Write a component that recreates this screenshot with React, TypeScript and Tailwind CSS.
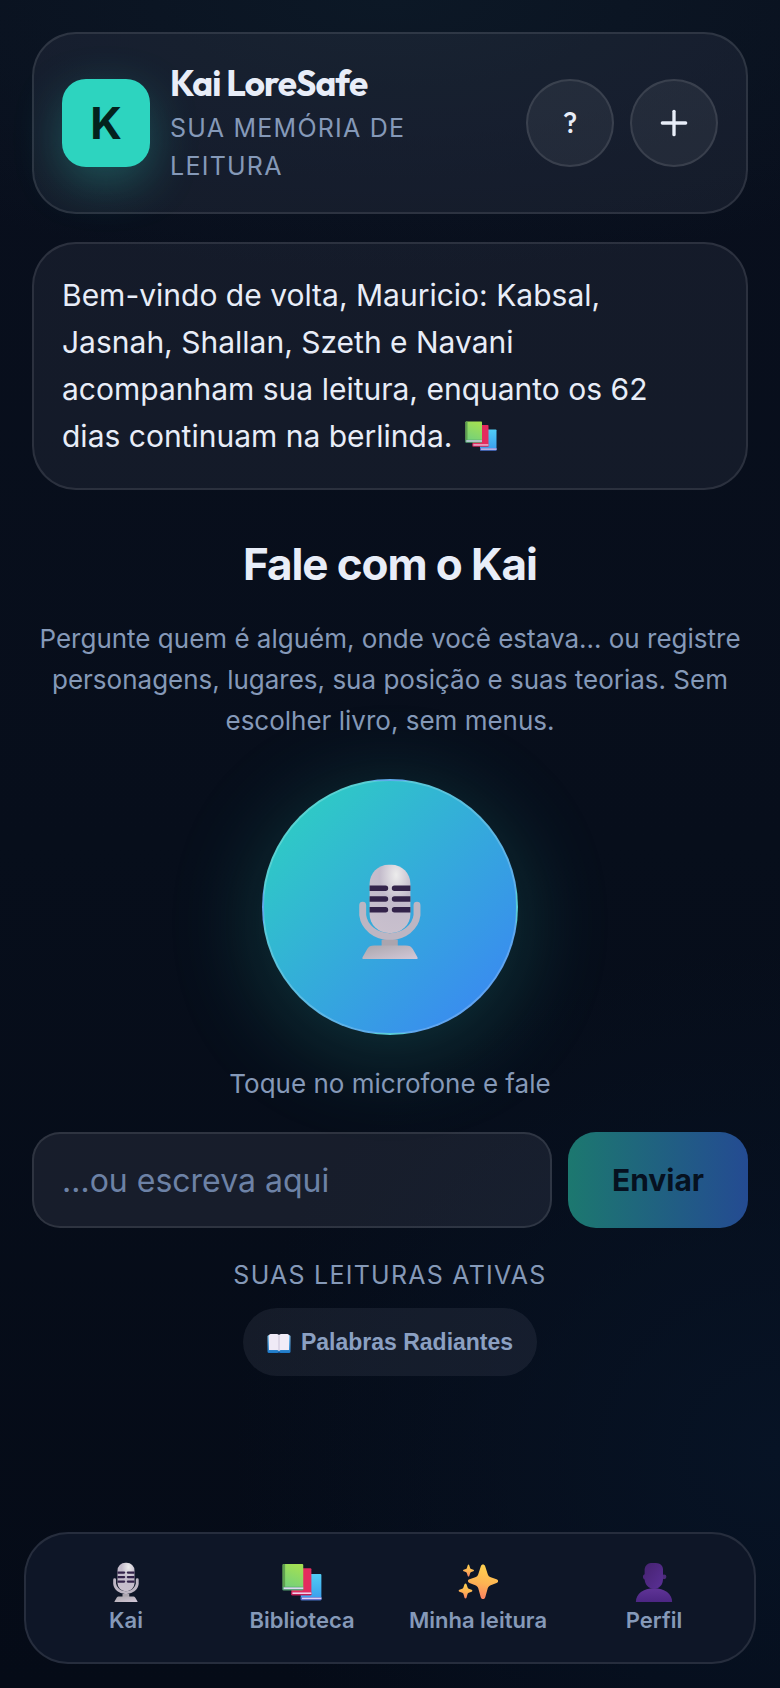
import { useState } from "react";
import { Plus } from "lucide-react";

function MicIcon({ className, id }: { className?: string; id: string }) {
  return (
    <svg viewBox="0 0 32 32" className={className} aria-hidden="true">
      <defs>
        <radialGradient id={`${id}-head`} cx="0.65" cy="0.15" r="0.9">
          <stop offset="0" stopColor="#ececec" />
          <stop offset="0.45" stopColor="#c3bbcb" />
          <stop offset="1" stopColor="#c9c0cd" />
        </radialGradient>
        <linearGradient id={`${id}-base`} x1="0" y1="0" x2="1" y2="1">
          <stop offset="0" stopColor="#aaa6ac" />
          <stop offset="1" stopColor="#d3c8d8" />
        </linearGradient>
      </defs>
      <path
        d="M6.9 14.1V17.4A9.1 8 0 0 0 25 17.4V14.1"
        fill="none"
        stroke="#bdb6c3"
        strokeWidth="2.3"
        strokeLinecap="round"
      />
      <path d="M13.2 25.6h5.4v2.8h-5.4z" fill="#aba5ae" />
      <path
        d="M10.8 27.5h10.4c1.3 0 1.9.3 2.4 1.2l1.5 2.6c.3.5.1.7-.4.7H7.3c-.5 0-.7-.2-.4-.7l1.5-2.6c.5-.9 1.1-1.2 2.4-1.2Z"
        fill={`url(#${id}-base)`}
      />
      <rect x="9.2" y="0.6" width="13.6" height="22.7" rx="6.3" fill={`url(#${id}-head)`} />
      <g fill="#33234a">
        <path d="M9.2 7.5h5.3a.9.9 0 0 1 0 1.8H9.2zM22.8 7.5h-5.3a.9.9 0 0 0 0 1.8h5.3z" />
        <path d="M9.2 11.1h5.3a.9.9 0 0 1 0 1.8H9.2zM22.8 11.1h-5.3a.9.9 0 0 0 0 1.8h5.3z" />
        <path d="M9.2 14.7h5.3a.9.9 0 0 1 0 1.8H9.2zM22.8 14.7h-5.3a.9.9 0 0 0 0 1.8h5.3z" />
      </g>
    </svg>
  );
}

function BooksIcon({ className, id }: { className?: string; id: string }) {
  return (
    <svg viewBox="0 0 32 32" className={className} aria-hidden="true">
      <defs>
        <linearGradient id={`${id}-g`} x1="0.7" y1="0" x2="0.4" y2="1">
          <stop offset="0" stopColor="#a4e052" />
          <stop offset="1" stopColor="#72d07c" />
        </linearGradient>
        <linearGradient id={`${id}-b`} x1="0" y1="0" x2="0" y2="1">
          <stop offset="0" stopColor="#50cdf5" />
          <stop offset="1" stopColor="#3a9bec" />
        </linearGradient>
      </defs>
      <rect x="15" y="9.5" width="16.5" height="21" rx="0.8" fill={`url(#${id}-b)`} />
      <path d="M15 28h16.5v2q0 .5-.5.5H15z" fill="#5865c8" />
      <path d="M16 28.5h15.5v1.2H16z" fill="#d9d3f3" />
      <rect x="7.5" y="5" width="16" height="21.5" rx="0.8" fill="#e42b5e" />
      <path d="M7.5 24h16v2q0 .5-.5.5H7.5z" fill="#c31e55" />
      <path d="M8.3 24.3h15.2v1.3H8.3z" fill="#f6cfe8" />
      <rect x="0.5" y="1.5" width="16.5" height="21" rx="0.8" fill={`url(#${id}-g)`} />
      <path d="M1.3 1.5h1.2v18.5H.5V2.3q0-.8.8-.8z" fill="#5fa050" />
      <path d="M.5 19.8H17v2.2q0 .5-.5.5H.5z" fill="#4e9b72" />
      <path d="M1.3 20.3H17v1.4H1.3z" fill="#dcd8ef" />
    </svg>
  );
}

function OpenBookIcon({ className }: { className?: string }) {
  return (
    <svg viewBox="0 0 24 24" className={className} aria-hidden="true">
      <defs>
        <linearGradient id="open-book-cover" x1="0" y1="0" x2="0" y2="1">
          <stop offset="0" stopColor="#8ec9ee" />
          <stop offset="1" stopColor="#1b78c8" />
        </linearGradient>
      </defs>
      <rect x="0.5" y="5" width="23" height="18" rx="1.5" fill="url(#open-book-cover)" />
      <path d="M2 5.5Q2 4 3.5 4H10q2 0 2 1.5v15.5q-.5-1-2-1H2z" fill="#efeaf6" />
      <path d="M22 5.5Q22 4 20.5 4H14q-2 0-2 1.5v15.5q.5-1 2-1h8z" fill="#f1ecf7" />
      <path d="M12 5.5V21" stroke="#c6bfd4" strokeWidth="0.9" />
      <path d="M10.5 22h3l-1.5 1.5z" fill="#134f94" />
    </svg>
  );
}

function SparklesIcon({ className }: { className?: string }) {
  return (
    <svg viewBox="0 0 32 32" className={className} aria-hidden="true">
      <defs>
        <linearGradient id="spark" x1="0.6" y1="0" x2="0.4" y2="1">
          <stop offset="0" stopColor="#ffd24f" />
          <stop offset="0.55" stopColor="#fdb353" />
          <stop offset="1" stopColor="#fb7f62" />
        </linearGradient>
      </defs>
      <g fill="url(#spark)">
        <path d="M18.2 3.5c.7-2 2.9-2 3.6 0l2 6.200c.4 1.200 1.200 2 2.400 2.400l4.600 1.600c1.700.6 1.700 2.500 0 3.100l-4.600 1.700c-1.200.4-2 1.200-2.400 2.400l-2 7.200c-.7 2-2.900 2-3.600 0l-2-7.200c-.4-1.200-1.200-2-2.400-2.400l-4.600-1.700c-1.700-.6-1.700-2.500 0-3.100l4.600-1.600c1.200-.4 2-1.200 2.400-2.400z" />
        <path d="M7.8 2.5c.2-.7 1-.7 1.200 0l.7 2.200q.2.700.9.900l1.700.6c.6.200.6 1 0 1.200l-1.700.6q-.7.200-.9.900L9 11.100c-.2.700-1 .7-1.200 0l-.7-2.200q-.2-.7-.9-.9l-1.700-.6c-.6-.2-.6-1 0-1.200l1.700-.6q.7-.2.900-.9z" />
        <path d="M5.2 17.7c.3-.8 1.300-.8 1.600 0l.9 2.700q.2.700.9.900l2.300.8c.8.300.8 1.300 0 1.600l-2.300.8q-.7.200-.9.900l-.9 3.100c-.3.800-1.300.8-1.600 0l-.9-3.100q-.2-.7-.9-.9l-2.300-.8c-.8-.3-.8-1.300 0-1.600l2.300-.8q.7-.2.900-.9z" />
      </g>
    </svg>
  );
}

function ProfileIcon({ className }: { className?: string }) {
  return (
    <svg viewBox="0 0 32 32" className={className} aria-hidden="true">
      <defs>
        <linearGradient id="profile-head" x1="0" y1="0" x2="1" y2="1">
          <stop offset="0" stopColor="#45226f" />
          <stop offset="1" stopColor="#5a3096" />
        </linearGradient>
        <linearGradient id="profile-body" x1="0" y1="0" x2="0" y2="1">
          <stop offset="0" stopColor="#5f3497" />
          <stop offset="1" stopColor="#4c2683" />
        </linearGradient>
      </defs>
      <path d="M1.5 32c0-6.5 6-11 14.5-11s14.5 4.5 14.5 11z" fill="url(#profile-body)" />
      <circle cx="24" cy="11.8" r="1.9" fill="#4b2b78" />
      <path
        d="M8.5 5.5C9 2.5 11 1 13.5.8h4c3.3.2 5.7 2 5.7 5.2v7.5c0 4.500-3 8-7.200 8s-7.300-3.500-7.500-7.500C7 13.500 6.500 10.500 8.500 9.800z"
        fill="url(#profile-head)"
      />
    </svg>
  );
}

const tabs = [
  { label: "Kai", icon: <MicIcon id="tab-mic" className="size-10" /> },
  { label: "Biblioteca", icon: <BooksIcon id="tab-books" className="size-10" /> },
  { label: "Minha leitura", icon: <SparklesIcon className="size-10" /> },
  { label: "Perfil", icon: <ProfileIcon className="size-10" /> },
];

const roundButton =
  "flex size-[88px] items-center justify-center rounded-full border-2 border-white/10 bg-white/6 text-[#e8edf8]";

export default function App() {
  const [message, setMessage] = useState("");

  return (
    <div className="flex min-h-screen flex-col bg-[#060c19] bg-[radial-gradient(ellipse_90%_16%_at_50%_0%,#0c1826_0%,transparent_100%),radial-gradient(ellipse_70%_30%_at_100%_86%,#071325_0%,transparent_100%),linear-gradient(180deg,#090f1d_0%,#070e1b_50%,#050b17_100%)] px-6 pb-6 pt-8 font-['Inter',sans-serif] text-[#e8edf8]">
      <div className="flex flex-col px-2">
        <header className="flex items-center gap-5 rounded-[44px] border-2 border-white/10 bg-[#dcdcff]/6 px-7 py-[27px]">
          <div className="flex size-[88px] shrink-0 items-center justify-center rounded-3xl bg-[#2dd4bf] text-[44px] font-bold text-[#03221d] shadow-[0_16px_48px_rgba(45,212,191,0.3)]">
            K
          </div>
          <div className="min-w-0 flex-1">
            <h1 className="font-['Outfit','Lato',sans-serif] text-[35px] font-bold leading-[44px] tracking-tight">
              Kai LoreSafe
            </h1>
            <p className="mt-1 text-[25px] leading-[38px] tracking-wider text-[#8599b8]">SUA MEMÓRIA DE LEITURA</p>
          </div>
          <div className="flex gap-4">
            <button type="button" aria-label="Ajuda" className={`${roundButton} font-['Outfit','Lato',sans-serif] text-[28px] font-medium`}>
              ?
            </button>
            <button type="button" aria-label="Adicionar" className={roundButton}>
              <Plus className="size-10" />
            </button>
          </div>
        </header>

        <section className="mt-7 rounded-[44px] border-2 border-white/10 bg-[#dcdcff]/6 p-7">
          <p className="pr-4 text-[30px] leading-[47px]">
            Bem-vindo de volta, Mauricio: Kabsal, Jasnah, Shallan, Szeth e Navani acompanham sua leitura, enquanto os 62
            dias continuam na berlinda.{" "}
            <BooksIcon id="greeting-books" className="ml-1 inline size-8 align-[-5px]" />
          </p>
        </section>

        <main className="flex flex-col items-center text-center">
          <h2 className="mt-12 text-[44px] font-bold leading-[52px] tracking-tight">Fale com o Kai</h2>
          <p className="mt-7 text-[26px] leading-[41px] text-[#8599b8]">
            Pergunte quem é alguém, onde você estava… ou registre personagens, lugares, sua posição e suas teorias. Sem
            escolher livro, sem menus.
          </p>
          <button
            type="button"
            aria-label="Falar"
            className="mt-[38px] flex size-64 items-center justify-center rounded-full border-2 border-white/20 bg-[linear-gradient(135deg,#2dd4bf,#3b82f6)] pt-2 shadow-[0_16px_96px_rgba(45,212,191,0.22)]"
          >
            <MicIcon id="main-mic" className="size-24" />
          </button>
          <p className="mt-7 text-[26px] leading-[41px] text-[#8599b8]">Toque no microfone e fale</p>

          <form className="mt-7 flex w-full gap-4" onSubmit={(event) => event.preventDefault()}>
            <input
              type="text"
              aria-label="Mensagem"
              placeholder="…ou escreva aqui"
              value={message}
              onChange={(event) => setMessage(event.target.value)}
              className="h-24 min-w-0 flex-1 rounded-[28px] border-2 border-white/10 bg-[#e6e6ff]/8 px-7 text-[32px] outline-none placeholder:text-[#6d82a6]"
            />
            <button
              type="submit"
              className="h-24 w-[180px] rounded-[28px] bg-[linear-gradient(90deg,#1c786f,#244b92)] text-[30px] font-bold text-[#061120]"
            >
              Enviar
            </button>
          </form>

          <h3 className="mt-7 text-[25px] leading-[38px] tracking-wider text-[#8599b8]">SUAS LEITURAS ATIVAS</h3>
          <button
            type="button"
            className="mt-3.5 flex h-[68px] items-center gap-2.5 rounded-full bg-[#e6e6ff]/7 px-6 font-['Liberation_Sans',Arial,sans-serif] text-[23px] font-bold text-[#8ba0c2]"
          >
            <OpenBookIcon className="size-6" />
            Palabras Radiantes
          </button>
        </main>
      </div>

      <nav className="sticky bottom-6 mt-auto grid h-[132px] grid-cols-4 rounded-[44px] border-2 border-white/10 bg-[#0e1627] px-3">
        {tabs.map((tab) => (
          <a key={tab.label} href="#" className="flex flex-col items-center pt-7 text-[22px] font-semibold leading-[36px] text-[#8599b8]">
            {tab.icon}
            {tab.label}
          </a>
        ))}
      </nav>
    </div>
  );
}
